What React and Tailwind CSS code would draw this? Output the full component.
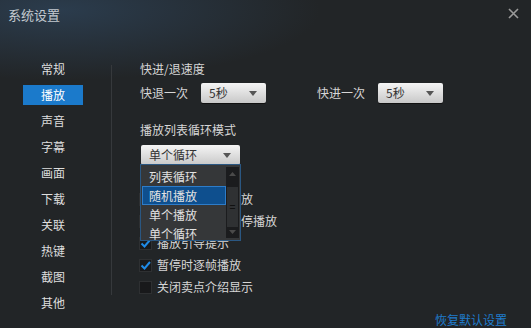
import React from "react";

const navItems = ["常规", "播放", "声音", "字幕", "画面", "下载", "关联", "热键", "截图", "其他"];

const Arrow = () => (
  <svg width="8" height="5" viewBox="0 0 8 5" className="shrink-0">
    <path d="M0 0 L8 0 L4 5 Z" fill="#555" />
  </svg>
);

const Select = ({ value, width }) => (
  <div
    className={`${width} h-[20px] flex items-center justify-between pl-[8px] pr-[9px] rounded-[2px] bg-[linear-gradient(#f5f5f5,#c8c8c8)] text-[#333] leading-none shadow-[0_1px_0_#111]`}
  >
    <span>{value}</span>
    <Arrow />
  </div>
);

const Checkbox = ({ checked, label }) => (
  <div className="h-[22px] flex items-center -ml-px">
    <div className="w-[13px] h-[13px] bg-[#18191b] border border-[#2e3032] flex items-center justify-center">
      {checked && (
        <svg width="11" height="11" viewBox="0 0 11 11">
          <path d="M1.5 5.5 L4.5 8.5 L10 2" fill="none" stroke="#1f8ae6" strokeWidth="2" />
        </svg>
      )}
    </div>
    <span className="ml-[5px] text-[#d6d6d6]">{label}</span>
  </div>
);

function App() {
  return (
    <div className="w-[531px] h-[328px] flex flex-col overflow-hidden bg-[#222527] bg-[radial-gradient(260px_70px_at_60px_10px,#2b3c4d,transparent)] font-['Noto_Sans_CJK_SC',sans-serif] text-[12px] leading-[18px]">
      {/* title bar */}
      <div className="h-[56px] shrink-0 flex items-start justify-between">
        <div className="pl-[8px] pt-[6px] text-[#c4cad0] text-[13px] leading-[18px]">系统设置</div>
        <svg width="11" height="11" viewBox="0 0 11 11" className="mt-[8px] mr-[12px]">
          <path d="M1 1 L10 10 M10 1 L1 10" stroke="#9a9a9a" strokeWidth="1.6" />
        </svg>
      </div>

      {/* body */}
      <div className="h-[255px] shrink-0 flex">
        <div className="w-[111px] shrink-0">
          {navItems.map((item, i) => (
            <div key={i} className="h-[26px] flex items-center">
              <span
                className={`ml-[23px] w-[60px] h-[20px] flex items-center justify-center ${
                  i === 1 ? "bg-[#1b7acb] text-white" : "text-[#dedede]"
                }`}
              >
                {item}
              </span>
            </div>
          ))}
        </div>
        <div className="w-px h-[230px] mt-[9px] bg-[#36393c]" />

        <div className="pl-[28px] flex flex-col">
          <div className="mt-[4px] text-[#d6d6d6]">快进/退速度</div>
          <div className="mt-[5px] h-[20px] flex items-center text-[#d6d6d6]">
            <span>快退一次</span>
            <div className="ml-[13px]">
              <Select value="5秒" width="w-[65px]" />
            </div>
            <span className="ml-[51px]">快进一次</span>
            <div className="ml-[13px]">
              <Select value="5秒" width="w-[65px]" />
            </div>
          </div>

          <div className="mt-[18px] text-[#d6d6d6]">播放列表循环模式</div>
          <div className="mt-[6px] ml-px relative z-10">
            <Select value="单个循环" width="w-[99px]" />
            {/* open list */}
            <div className="absolute top-[19px] -left-px w-[101px] h-[77px] overflow-hidden bg-[#353739] border border-[#2a5782] flex">
              <div className="flex-1 pt-[2px] pl-px text-[#e2e2e2]">
                <div className="h-[19px] flex items-center pl-[7px]">列表循环</div>
                <div className="h-[19px] flex items-center pl-[6px] bg-[#0e4f8e] border border-[#2d7cc9]">随机播放</div>
                <div className="h-[19px] flex items-center pl-[7px]">单个播放</div>
                <div className="h-[19px] flex items-center pl-[7px]">单个循环</div>
              </div>
              <div className="w-[13px] my-[2px] mr-px bg-[#1b1c1e] flex flex-col items-center">
                <svg width="7" height="4" viewBox="0 0 7 4" className="mt-[5px]">
                  <path d="M0 4 L7 4 L3.5 0 Z" fill="#4a4a4a" />
                </svg>
                <div className="mt-[11px] w-[11px] h-[40px] bg-[#2f3133] flex items-center justify-center text-[#111] text-[10px] leading-none font-bold">
                  =
                </div>
                <svg width="7" height="4" viewBox="0 0 7 4" className="mt-auto mb-[4px]">
                  <path d="M0 0 L7 0 L3.5 4 Z" fill="#4a4a4a" />
                </svg>
              </div>
            </div>
          </div>

          <div className="mt-[23px] flex flex-col">
            <Checkbox checked label="打开文件自动播放" />
            <Checkbox checked label="最小化时自动暂停播放" />
            <Checkbox checked label="播放引导提示" />
            <Checkbox checked label="暂停时逐帧播放" />
            <Checkbox checked={false} label="关闭卖点介绍显示" />
          </div>
        </div>
      </div>

      {/* footer */}
      <div className="h-[17px] flex justify-end pr-[24px] leading-[17px]">
        <span className="text-[#1f7ccc]">恢复默认设置</span>
      </div>
    </div>
  );
}

export default App;
